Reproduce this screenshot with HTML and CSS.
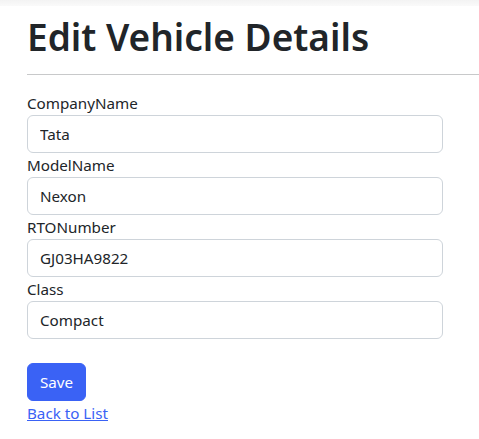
FILE: index.html
```html
<!DOCTYPE html>
<html lang="en">
<head>
<meta charset="utf-8">
<title>Edit Vehicle Details</title>
<link rel="stylesheet" href="styles.css">
</head>
<body>
<div class="topbar"></div>
<main class="page">
  <h1 class="title">Edit Vehicle Details</h1>
  <hr class="rule">
  <form class="form">
    <div class="field">
      <label class="label">CompanyName</label>
      <input class="input" type="text" value="Tata">
    </div>
    <div class="field">
      <label class="label">ModelName</label>
      <input class="input" type="text" value="Nexon">
    </div>
    <div class="field">
      <label class="label">RTONumber</label>
      <input class="input" type="text" value="GJ03HA9822">
    </div>
    <div class="field">
      <label class="label">Class</label>
      <input class="input" type="text" value="Compact">
    </div>
    <div class="actions">
      <button class="btn" type="button">Save</button>
    </div>
  </form>
  <a class="back" href="#">Back to List</a>
</main>
</body>
</html>
```
FILE: styles.css
```css
* { box-sizing: border-box; }
html, body { margin: 0; padding: 0; background: #fff; }
body {
  font-family: "Noto Sans", "Open Sans", sans-serif;
  font-size: 15.2px;
  line-height: 24px;
  color: #212529;
  width: 479px;
  overflow: hidden;
}
.topbar {
  height: 6px;
  background: linear-gradient(#f3f3f3, #fafafa);
}
.page {
  padding-left: 27px;
}
.title {
  margin: 7px 0 0;
  font-size: 37px;
  line-height: 48px;
  font-weight: 600;
  color: #212529;
}
.rule {
  margin: 13px 0 16px;
  border: 0;
  border-top: 1px solid #c8c9ca;
  height: 0;
}
.form { display: flex; flex-direction: column; }
.field { display: flex; flex-direction: column; width: 416px; }
.label { display: block; line-height: 24px; }
.input {
  display: block;
  width: 416px;
  height: 38px;
  padding: 6px 12px;
  font: inherit;
  color: #212529;
  background: #fff;
  border: 1px solid #ced4da;
  border-radius: 6px;
}
.actions { margin-top: 24px; }
.btn {
  display: inline-block;
  height: 38px;
  padding: 6px 12px;
  font: inherit;
  color: #fff;
  background: #3a62f5;
  border: 1px solid #3a62f5;
  border-radius: 6px;
}
.back {
  display: inline-block;
  color: #3a62f5;
  text-decoration: underline;
  line-height: 24px;
}
```
